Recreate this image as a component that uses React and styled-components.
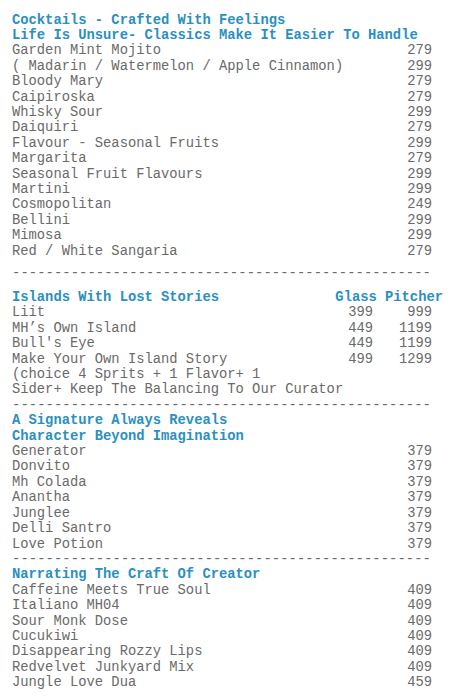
import React from "react";
import styled, { createGlobalStyle } from "styled-components";

const Global = createGlobalStyle`
  html, body { margin: 0; padding: 0; background: #ffffff; }
  body {
    font-family: "Liberation Mono", "Courier New", monospace;
    font-size: 13.8px;
    line-height: 15.4px;
    color: #6a6a6a;
  }
`;

const Page = styled.div`
  width: 420px;
  padding: 12.5px 0 0 12px;
  display: flex;
  flex-direction: column;
`;

const Section = styled.section`
  display: flex;
  flex-direction: column;
`;

const Title = styled.div`
  font-weight: bold;
  color: #2a8fc1;
  white-space: pre;
`;

const HeadRow = styled.div`
  display: flex;
  justify-content: space-between;
  font-weight: bold;
  color: #2a8fc1;
  white-space: pre;
`;

const ColHeads = styled.span`
  margin-right: -11px;
`;

const Row = styled.div`
  display: flex;
  justify-content: space-between;
  white-space: pre;
`;

const Row3 = styled.div`
  display: grid;
  grid-template-columns: 1fr 40px 59px;
  white-space: pre;
`;

const Num = styled.span`
  text-align: right;
`;

const Divider = styled.div`
  white-space: pre;
  letter-spacing: 0.1px;
  margin: ${(p) => (p.$wide ? "7px 0 8.6px" : "0")};
`;

const DASHES = "-".repeat(50);

const classics = [
  ["Garden Mint Mojito", "279"],
  ["( Madarin / Watermelon / Apple Cinnamon)", "299"],
  ["Bloody Mary", "279"],
  ["Caipiroska", "279"],
  ["Whisky Sour", "299"],
  ["Daiquiri", "279"],
  ["Flavour - Seasonal Fruits", "299"],
  ["Margarita", "279"],
  ["Seasonal Fruit Flavours", "299"],
  ["Martini", "299"],
  ["Cosmopolitan", "249"],
  ["Bellini", "299"],
  ["Mimosa", "299"],
  ["Red / White Sangaria", "279"],
];

const islands = [
  ["Liit", "399", "999"],
  ["MH\u2019s Own Island", "449", "1199"],
  ["Bull's Eye", "449", "1199"],
  ["Make Your Own Island Story", "499", "1299"],
  ["(choice 4 Sprits + 1 Flavor+ 1", "", ""],
  ["Sider+ Keep The Balancing To Our Curator", "", ""],
];

const signature = [
  ["Generator", "379"],
  ["Donvito", "379"],
  ["Mh Colada", "379"],
  ["Anantha", "379"],
  ["Junglee", "379"],
  ["Delli Santro", "379"],
  ["Love Potion", "379"],
];

const creator = [
  ["Caffeine Meets True Soul", "409"],
  ["Italiano MH04", "409"],
  ["Sour Monk Dose", "409"],
  ["Cucukiwi", "409"],
  ["Disappearing Rozzy Lips", "409"],
  ["Redvelvet Junkyard Mix", "409"],
  ["Jungle Love Dua", "459"],
];

const Items = ({ list }) =>
  list.map(([n, p]) => (
    <Row key={n}>
      <span>{n}</span>
      <Num>{p}</Num>
    </Row>
  ));

export default function App() {
  return (
    <>
      <Global />
      <Page>
        <Section>
          <Title>Cocktails - Crafted With Feelings</Title>
          <Title>Life Is Unsure- Classics Make It Easier To Handle</Title>
          <Items list={classics} />
        </Section>
        <Divider $wide>{DASHES}</Divider>
        <Section>
          <HeadRow>
            <span>Islands With Lost Stories</span>
            <ColHeads>Glass Pitcher</ColHeads>
          </HeadRow>
          {islands.map(([n, g, p]) => (
            <Row3 key={n}>
              <span>{n}</span>
              <Num>{g}</Num>
              <Num>{p}</Num>
            </Row3>
          ))}
        </Section>
        <Divider>{DASHES}</Divider>
        <Section>
          <Title>A Signature Always Reveals</Title>
          <Title>Character Beyond Imagination</Title>
          <Items list={signature} />
        </Section>
        <Divider>{DASHES}</Divider>
        <Section>
          <Title>Narrating The Craft Of Creator</Title>
          <Items list={creator} />
        </Section>
      </Page>
    </>
  );
}
